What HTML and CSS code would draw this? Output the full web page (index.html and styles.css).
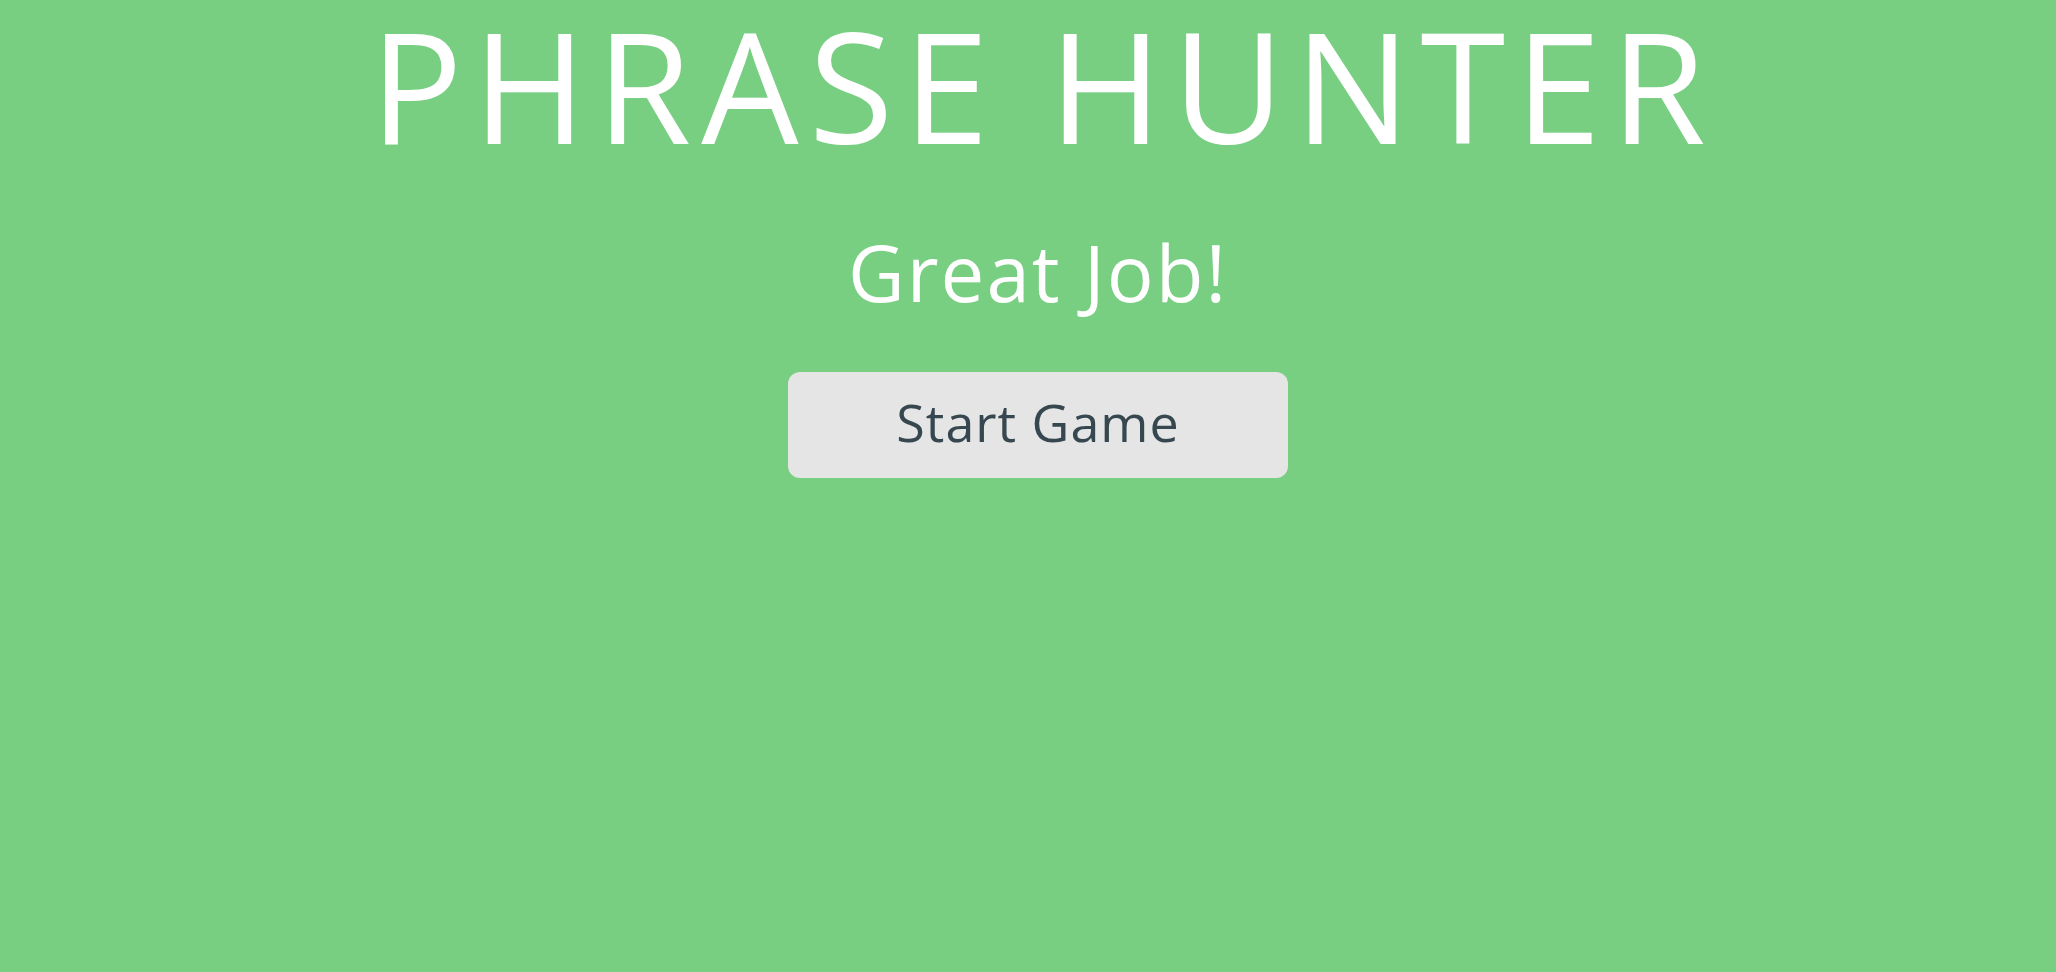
FILE: index.html
```html
<!DOCTYPE html>
<html lang="en">
<head>
<meta charset="utf-8">
<title>Phrase Hunter</title>
<link rel="stylesheet" href="styles.css">
</head>
<body>
<div class="overlay win">
  <h2 class="title">Phrase Hunter</h2>
  <h1 class="game-over-message">Great Job!</h1>
  <button class="btn-reset">Start Game</button>
</div>
</body>
</html>
```
FILE: styles.css
```css
html, body {
  margin: 0;
  padding: 0;
  height: 100%;
}
body {
  font-family: "Open Sans", "Noto Sans", sans-serif;
  background: #78cf82;
}
.overlay {
  display: flex;
  flex-direction: column;
  align-items: center;
  min-height: 100%;
  box-sizing: border-box;
  padding-left: 20px;
}
.win {
  background-color: #78cf82;
}
.title {
  margin: 0;
  color: #fff;
  font-weight: 400;
  font-size: 154px;
  line-height: 168px;
  text-transform: uppercase;
  letter-spacing: 10px;
  text-indent: 10px;
}
.game-over-message {
  margin: 54px 0 0;
  color: #fff;
  font-weight: 400;
  font-size: 78px;
  line-height: 100px;
  letter-spacing: 2px;
}
.btn-reset {
  margin-top: 50px;
  width: 500px;
  height: 106px;
  padding: 0 0 8px;
  border: none;
  border-radius: 12px;
  background: #e5e5e5;
  color: #37474f;
  font-family: "Open Sans", "Noto Sans", sans-serif;
  font-size: 52px;
  font-weight: 400;
  letter-spacing: 1px;
  cursor: pointer;
}
```
